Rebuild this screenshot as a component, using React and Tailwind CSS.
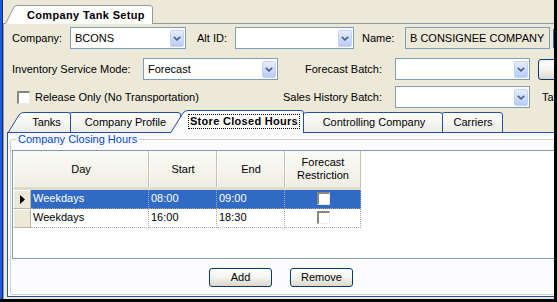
import React from "react";

const TAB_BLUE = "#24509c";

function Chevron() {
  return (
    <svg width="8" height="5" viewBox="0 0 8 5">
      <path d="M0.8 0.8 L4 3.8 L7.2 0.8" fill="none" stroke="#4d6185" strokeWidth="1.7" />
    </svg>
  );
}

function Combo({ cls, value = "" }) {
  return (
    <div className={`flex shrink-0 items-center border border-[#7f9db9] bg-white ${cls}`}>
      <span className="flex-1 overflow-hidden whitespace-nowrap pl-[4px]">{value}</span>
      <span className="mr-[1px] flex h-[17px] w-[14px] items-center justify-center rounded-[2px] border border-[#c3d3fd] bg-linear-to-b from-[#e6eefe] to-[#b7cbf6]">
        <Chevron />
      </span>
    </div>
  );
}

function SunkenBox() {
  return (
    <span className="block h-[13px] w-[13px] shrink-0 border-t-2 border-l-2 border-r border-b border-t-[#8a887d] border-l-[#8a887d] border-r-[#eeece2] border-b-[#eeece2] bg-white" />
  );
}

function Tab({ w, h, s = 14, label, cls, selected, id }) {
  const top = `M0.5 ${h} L${s - 3} 3 Q${s - 1} 0.5 ${s + 2} 0.5 L${w - 3} 0.5 Q${w - 0.5} 0.5 ${w - 0.5} 3 L${w - 0.5} ${h}`;
  return (
    <div className={`relative flex shrink-0 items-center justify-center pl-[14px] ${cls}`}>
      <svg className="absolute left-0 top-0" width={w} height={h} viewBox={`0 0 ${w} ${h}`}>
        <defs>
          <linearGradient id={id} x1="0" y1="0" x2="0" y2="1">
            <stop offset="0" stopColor="#ffffff" />
            <stop offset="1" stopColor={selected ? "#fcfcfe" : "#ecebe5"} />
          </linearGradient>
        </defs>
        <path d={top + " Z"} fill={`url(#${id})`} />
        <path d={top} fill="none" stroke={TAB_BLUE} />
      </svg>
      {selected ? (
        <span className="relative border border-dotted border-black px-[1px] font-bold leading-[13px] tracking-[0.3px]">
          {label}
        </span>
      ) : (
        <span className="relative whitespace-nowrap leading-[13px]">{label}</span>
      )}
    </div>
  );
}

function HeaderCell({ cls, children }) {
  return (
    <div
      className={`flex shrink-0 items-center justify-center border-b-[3px] border-l border-r border-b-[#dedbc9] border-l-white border-r-[#c5c2b0] bg-linear-to-b from-[#fbfbf7] to-[#efeee3] text-center leading-[13px] ${cls}`}
    >
      {children}
    </div>
  );
}

function Cell({ cls, children, sel }) {
  return (
    <div
      className={`flex shrink-0 items-center border-r border-b border-dotted border-[#a7a7a7] pl-[2px] pb-[1px] ${
        sel ? "bg-[#316ac5] text-white" : ""
      } ${cls}`}
    >
      {children}
    </div>
  );
}

function Row({ sel, day, start, end }) {
  return (
    <div className="flex h-[19px]">
      <div className="flex w-[18px] shrink-0 items-center justify-center border-t border-l border-r border-b border-t-white border-l-white border-r-[#b9b6a4] border-b-[#b9b6a4] bg-[#ece9d8]">
        {sel && (
          <svg width="5" height="9" viewBox="0 0 5 9">
            <polygon points="0,0 5,4.5 0,9" fill="#000" />
          </svg>
        )}
      </div>
      <Cell cls="w-[118px]" sel={sel}>{day}</Cell>
      <Cell cls="w-[68px]" sel={sel}>{start}</Cell>
      <Cell cls="w-[68px]" sel={sel}>{end}</Cell>
      <Cell cls="w-[76px] justify-center pl-0" sel={sel}>
        <SunkenBox />
      </Cell>
    </div>
  );
}

function XPButton({ children, cls }) {
  return (
    <div
      className={`flex h-[19px] shrink-0 items-center justify-center rounded-[3px] border border-[#003c74] bg-linear-to-b from-[#ffffff] via-[#f4f3ee] to-[#dcd8cc] ${cls}`}
    >
      {children}
    </div>
  );
}

export default function App() {
  return (
    <div className="flex h-[302px] w-[557px] flex-col overflow-hidden bg-black font-['Liberation_Sans',Arial,sans-serif] text-[11px] leading-[13px] text-black">
      <div className="flex h-[299px]">
        <div className="w-[2px] shrink-0 bg-[#1c5ae0]" />
        <div className="w-[1px] shrink-0 bg-[#0c2a78]" />
        <div className="flex w-[551px] shrink-0 flex-col overflow-hidden bg-[#ece9d8]">
          {/* top tab strip */}
          <div className="relative z-10 flex h-[23px] items-end pl-[2px]">
            <div className="relative -mb-[1px] flex h-[19px] w-[148px] items-center pl-[22px] pt-[1px]">
              <svg className="absolute left-0 top-0" width="148" height="19" viewBox="0 0 148 19">
                <path d="M0.5 19 L8.5 3 Q9.5 0.5 12 0.5 L145 0.5 Q147.5 0.5 147.5 3 L147.5 19 Z" fill="#ffffff" />
                <path d="M0.5 19 L8.5 3 Q9.5 0.5 12 0.5 L145 0.5 Q147.5 0.5 147.5 3 L147.5 19" fill="none" stroke="#919b9c" />
              </svg>
              <span className="relative font-bold tracking-[0.35px]">Company Tank Setup</span>
            </div>
          </div>

          {/* outer panel */}
          <div className="flex h-[276px] flex-col border-t border-l border-[#919b9c] pt-[3px]">
            {/* row 1 */}
            <div className="flex h-[22px] items-center pl-[8px]">
              <span className="w-[58px] shrink-0 whitespace-nowrap">Company:</span>
              <Combo cls="h-[22px] w-[116px]" value="BCONS" />
              <span className="ml-[11px] w-[38px] shrink-0 whitespace-nowrap">Alt ID:</span>
              <Combo cls="h-[22px] w-[119px]" />
              <span className="ml-[8px] w-[43px] shrink-0 whitespace-nowrap">Name:</span>
              <div className="flex h-[22px] w-[145px] shrink-0 items-center border border-[#7f9db9] bg-[#ece9d8] pl-[4px] whitespace-nowrap">
                B CONSIGNEE COMPANY
              </div>
              <div className="ml-[3px] h-[21px] w-[30px] shrink-0 rounded-[2px] border border-[#3f6aa8] bg-[#f4f3ee]" />
            </div>

            {/* row 2 */}
            <div className="mt-[9px] flex h-[22px] items-center pl-[8px]">
              <span className="w-[131px] shrink-0 whitespace-nowrap">Inventory Service Mode:</span>
              <Combo cls="h-[22px] w-[135px]" value="Forecast" />
              <span className="w-[117px] shrink-0 whitespace-nowrap pr-[13px] text-right">Forecast Batch:</span>
              <Combo cls="h-[22px] w-[135px]" />
              <XPButton cls="ml-[8px] h-[21px] w-[30px]" />
            </div>

            {/* row 3 */}
            <div className="mt-[6px] flex h-[22px] items-center pl-[13px]">
              <SunkenBox />
              <div className="flex w-[365px] shrink-0 items-center justify-between whitespace-nowrap">
                <span className="ml-[5px]">Release Only (No Transportation)</span>
                <span className="pr-[13px]">Sales History Batch:</span>
              </div>
              <Combo cls="h-[22px] w-[135px]" />
              <span className="ml-[12px] whitespace-nowrap">Tax</span>
            </div>

            {/* tab strip */}
            <div className="relative z-10 flex h-[24px] shrink-0 items-end pl-[4px]">
              <Tab id="t1" w={63} h={20} cls="z-40 h-[20px] w-[63px]" label="Tanks" />
              <Tab id="t2" w={125} h={20} cls="z-30 -ml-[15px] h-[20px] w-[125px]" label="Company Profile" />
              <Tab id="t3" w={134} h={23} s={16} selected cls="z-50 -mb-[1px] -ml-[11px] h-[23px] w-[134px]" label="Store Closed Hours" />
              <Tab id="t4" w={152} h={20} cls="z-20 -ml-[13px] h-[20px] w-[152px]" label="Controlling Company" />
              <Tab id="t5" w={74} h={20} cls="z-10 -ml-[14px] h-[20px] w-[74px]" label="Carriers" />
            </div>

            {/* tab page */}
            <div className="ml-[3px] h-[165px] w-[560px] shrink-0 overflow-hidden border border-[#24509c] bg-[#fcfcfe]">
              <fieldset className="ml-[2px] w-[560px] rounded-[3px] border border-[#d0d0bf] px-[1px] pt-[4px] pb-[7px]">
                <legend className="ml-[4px] px-[2px] leading-[13px] text-[#0046d5]">Company Closing Hours</legend>
                <div className="h-[109px] w-[560px] border border-[#7f9db9] bg-white">
                  <div className="flex h-[39px]">
                    <HeaderCell cls="w-[136px]">Day</HeaderCell>
                    <HeaderCell cls="w-[68px]">Start</HeaderCell>
                    <HeaderCell cls="w-[68px]">End</HeaderCell>
                    <HeaderCell cls="w-[76px]">
                      <span>
                        Forecast
                        <br />
                        Restriction
                      </span>
                    </HeaderCell>
                  </div>
                  <Row sel day="Weekdays" start="08:00" end="09:00" />
                  <Row day="Weekdays" start="16:00" end="18:30" />
                </div>
                <div className="mt-[9px] flex gap-[18px] pl-[197px]">
                  <XPButton cls="w-[63px]">Add</XPButton>
                  <XPButton cls="w-[63px]">Remove</XPButton>
                </div>
              </fieldset>
            </div>
          </div>
        </div>
        <div className="w-[3px] shrink-0 bg-black" />
      </div>
      <div className="h-[3px] bg-black" />
    </div>
  );
}
